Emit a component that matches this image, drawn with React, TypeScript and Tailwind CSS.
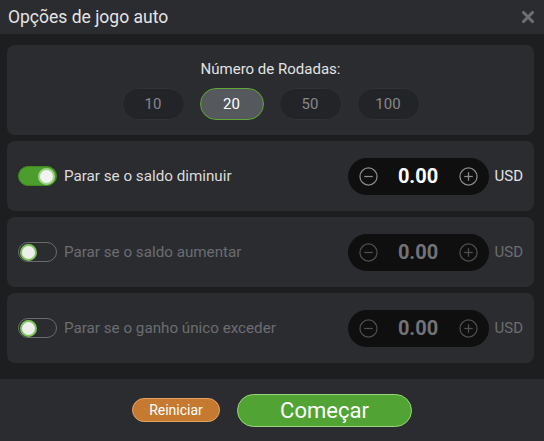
import React, { useState } from "react";

const ROUNDS = [10, 20, 50, 100];

function Toggle({ on }: { on: boolean }) {
  if (on) {
    return (
      <div className="flex h-[20px] w-[39px] shrink-0 items-center justify-end rounded-full border border-[#3f8a22] bg-[#4c9d2c] pr-[1px]">
        <div className="h-[17px] w-[17px] rounded-full border-2 border-[#9fd389] bg-[#f2f2f2]" />
      </div>
    );
  }
  return (
    <div className="flex h-[20px] w-[39px] shrink-0 items-center justify-start rounded-full border border-[#6a6b6e] pl-[1px]">
      <div className="h-[17px] w-[17px] rounded-full border-2 border-[#7fc35a] bg-[#eeeeee]" />
    </div>
  );
}

function CircleIcon({ plus, color }: { plus?: boolean; color: string }) {
  return (
    <svg width="19" height="19" viewBox="0 0 20 20" fill="none" stroke={color} strokeWidth="1.3">
      <circle cx="10" cy="10" r="9" />
      <line x1="5.5" y1="10" x2="14.5" y2="10" />
      {plus && <line x1="10" y1="5.5" x2="10" y2="14.5" />}
    </svg>
  );
}

function LimitRow({ label, on }: { label: string; on: boolean }) {
  return (
    <div className="flex h-[70px] items-center rounded-lg bg-[#2b2c30] pl-[11px] pr-[11px]">
      <Toggle on={on} />
      <span className={`ml-[7px] text-[15.2px] ${on ? "text-[#dcdcdc]" : "text-[#6c6d70]"}`}>{label}</span>
      <div className="ml-auto flex h-[37px] w-[141px] items-center justify-between rounded-full bg-[#0f0f10] px-[11px]">
        <CircleIcon color={on ? "#8c8c8c" : "#4e4f51"} />
        <span className={`text-[20px] font-bold ${on ? "text-white" : "text-[#727376]"}`}>0.00</span>
        <CircleIcon plus color={on ? "#8c8c8c" : "#4e4f51"} />
      </div>
      <span className={`ml-[6px] text-[15px] ${on ? "text-[#e2e2e2]" : "text-[#6c6d70]"}`}>USD</span>
    </div>
  );
}

export default function App() {
  const [rounds, setRounds] = useState(20);

  return (
    <div className="flex h-[441px] w-[544px] flex-col bg-[#1d1e20] font-['Roboto',sans-serif]">
      <div className="flex h-[34px] shrink-0 items-center justify-between bg-[#2b2c30] pl-[8px] pr-[10px]">
        <span className="text-[17.5px] text-[#e4e4e4]">Opções de jogo auto</span>
        <svg width="12" height="12" viewBox="0 0 12 12" stroke="#6e6f73" strokeWidth="3" strokeLinecap="square">
          <line x1="1.5" y1="1.5" x2="10.5" y2="10.5" />
          <line x1="10.5" y1="1.5" x2="1.5" y2="10.5" />
        </svg>
      </div>

      <div className="flex flex-col gap-[6px] pb-[16px] pl-[7px] pr-[10px] pt-[11px]">
        <div className="flex h-[90px] flex-col items-center rounded-lg bg-[#2b2c30] pt-[15px]">
          <span className="text-[15px] leading-[18px] text-[#e2e2e2]">Número de Rodadas:</span>
          <div className="mt-[10px] flex gap-[15px]">
            {ROUNDS.map((r) =>
              r === rounds ? (
                <button
                  key={r}
                  onClick={() => setRounds(r)}
                  className="flex h-[32px] w-[64px] items-center justify-center rounded-full border border-[#5fa636] bg-[#55585d] text-[15px] text-white"
                >
                  {r}
                </button>
              ) : (
                <button
                  key={r}
                  onClick={() => setRounds(r)}
                  className="flex h-[32px] w-[63px] items-center justify-center rounded-full border border-[#303135] bg-[#232427] text-[15px] text-[#86878a]"
                >
                  {r}
                </button>
              )
            )}
          </div>
        </div>

        <LimitRow label="Parar se o saldo diminuir" on />
        <LimitRow label="Parar se o saldo aumentar" on={false} />
        <LimitRow label="Parar se o ganho único exceder" on={false} />
      </div>

      <div className="flex flex-1 items-center justify-center gap-[17px] bg-[#2b2c30]">
        <button className="flex h-[24px] w-[88px] items-center justify-center rounded-full border border-[#e4a262] bg-[#c67930] text-[14px] text-white">
          Reiniciar
        </button>
        <button className="flex h-[33px] w-[175px] items-center justify-center rounded-full border border-[#9bd47c] bg-[#51a434] text-[22px] text-white">
          Começar
        </button>
      </div>
    </div>
  );
}
